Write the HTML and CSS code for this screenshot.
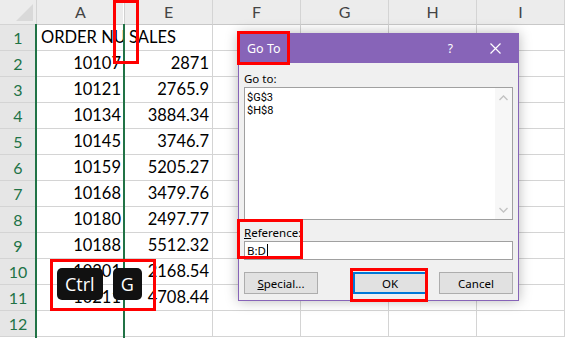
FILE: index.html
```html
<!DOCTYPE html>
<html lang="en">

<head>
    <meta charset="UTF-8">
    <meta name="viewport" content="width=device-width, initial-scale=1.0">
    <title>Go To</title>
    <link rel="stylesheet" href="styles.css">
</head>

<body>
    <div class="sheet">
        <div class="grid">
            <div class="corner">
                <svg width="17" height="17" viewBox="0 0 17 17"><polygon points="17,0 17,17 0,17" fill="#d9d9d9"/></svg>
            </div>
            <div class="col-head">A<span class="hidden-mark"></span></div>
            <div class="col-head">E</div>
            <div class="col-head">F</div>
            <div class="col-head">G</div>
            <div class="col-head">H</div>
            <div class="col-head">I</div>

            <div class="row-head">1</div><div class="cell">ORDER NU</div><div class="cell">SALES</div><div class="cell"></div><div class="cell"></div><div class="cell"></div><div class="cell"></div>
            <div class="row-head">2</div><div class="cell num">10107</div><div class="cell num">2871</div><div class="cell"></div><div class="cell"></div><div class="cell"></div><div class="cell"></div>
            <div class="row-head">3</div><div class="cell num">10121</div><div class="cell num">2765.9</div><div class="cell"></div><div class="cell"></div><div class="cell"></div><div class="cell"></div>
            <div class="row-head">4</div><div class="cell num">10134</div><div class="cell num">3884.34</div><div class="cell"></div><div class="cell"></div><div class="cell"></div><div class="cell"></div>
            <div class="row-head">5</div><div class="cell num">10145</div><div class="cell num">3746.7</div><div class="cell"></div><div class="cell"></div><div class="cell"></div><div class="cell"></div>
            <div class="row-head">6</div><div class="cell num">10159</div><div class="cell num">5205.27</div><div class="cell"></div><div class="cell"></div><div class="cell"></div><div class="cell"></div>
            <div class="row-head">7</div><div class="cell num">10168</div><div class="cell num">3479.76</div><div class="cell"></div><div class="cell"></div><div class="cell"></div><div class="cell"></div>
            <div class="row-head">8</div><div class="cell num">10180</div><div class="cell num">2497.77</div><div class="cell"></div><div class="cell"></div><div class="cell"></div><div class="cell"></div>
            <div class="row-head">9</div><div class="cell num">10188</div><div class="cell num">5512.32</div><div class="cell"></div><div class="cell"></div><div class="cell"></div><div class="cell"></div>
            <div class="row-head">10</div><div class="cell num">10201</div><div class="cell num">2168.54</div><div class="cell"></div><div class="cell"></div><div class="cell"></div><div class="cell"></div>
            <div class="row-head">11</div><div class="cell num">10211</div><div class="cell num">4708.44</div><div class="cell"></div><div class="cell"></div><div class="cell"></div><div class="cell"></div>
            <div class="row-head">12</div><div class="cell"></div><div class="cell"></div><div class="cell"></div><div class="cell"></div><div class="cell"></div><div class="cell"></div>
        </div>

        <!-- selection edges -->
        <div class="sel-line sel-left"></div>
        <div class="sel-line sel-mid"></div>

        <div class="keys">
            <span class="key">Ctrl</span>
            <span class="key">G</span>
        </div>

        <div class="dialog">
            <div class="titlebar">
                <span class="title">Go To</span>
                <span class="help">?</span>
                <svg class="close" width="11" height="11" viewBox="0 0 11 11"><path d="M0.5 0.5 L10.5 10.5 M10.5 0.5 L0.5 10.5" stroke="#fff" stroke-width="1.2"/></svg>
            </div>
            <div class="dialog-body">
                <div class="label">Go to:</div>
                <div class="listbox">
                    <div class="items">
                        <div>$G$3</div>
                        <div>$H$8</div>
                    </div>
                    <div class="scrollbar">
                        <svg width="9" height="6" viewBox="0 0 9 6"><path d="M0.5 5 L4.5 1 L8.5 5" fill="none" stroke="#c2c2c2" stroke-width="1.3"/></svg>
                        <svg width="9" height="6" viewBox="0 0 9 6"><path d="M0.5 1 L4.5 5 L8.5 1" fill="none" stroke="#c2c2c2" stroke-width="1.3"/></svg>
                    </div>
                </div>
                <div class="label ref-label"><u>R</u>eference:</div>
                <div class="textbox">B:D<span class="caret"></span></div>
                <div class="buttons">
                    <button class="btn"><u>S</u>pecial...</button>
                    <button class="btn btn-default">OK</button>
                    <button class="btn">Cancel</button>
                </div>
            </div>
        </div>

        <!-- callout boxes -->
        <div class="mark mark-col"></div>
        <div class="mark mark-title"></div>
        <div class="mark mark-ref"></div>
        <div class="mark mark-ok"></div>
        <div class="mark mark-keys"></div>
    </div>
</body>
</html>
```

FILE: styles.css
```css
body {
    margin: 0;
    background: #fff;
    overflow: hidden;
}

.sheet {
    position: relative;
    width: 566px;
    height: 338px;
    overflow: hidden;
    font-family: Lato, "Liberation Sans", sans-serif;
}

.grid {
    display: grid;
    grid-template-columns: 37px repeat(6, 88px);
    grid-template-rows: 25px repeat(12, 26px);
}

.grid > div {
    box-sizing: border-box;
    border-right: 1px solid #d4d4d4;
    border-bottom: 1px solid #d4d4d4;
}

.corner {
    background: #ececec;
    display: flex;
    align-items: flex-end;
    justify-content: flex-end;
    padding: 0 3px 3px 0;
}

.corner svg {
    display: block;
}

.col-head {
    position: relative;
    background: #ececec;
    color: #444;
    font-size: 16px;
    text-align: center;
    line-height: 24px;
    border-bottom-color: #c8c8c8 !important;
}

.hidden-mark {
    position: absolute;
    right: -3px;
    top: 0;
    width: 2px;
    height: 24px;
    border-left: 1px solid #fff;
    border-right: 1px solid #fff;
    background: #d0d0d0;
}

.row-head {
    background: #e6e6e6;
    color: #217346;
    font-size: 16px;
    text-align: center;
    line-height: 25px;
}

.cell {
    font-size: 16.5px;
    line-height: 25px;
    padding: 0 3px 0 4px;
    white-space: nowrap;
    overflow: hidden;
    color: #000;
}

.num {
    text-align: right;
}

.sel-line {
    position: absolute;
    top: 24px;
    bottom: 0;
    width: 2px;
    background: #217346;
}

.sel-left {
    left: 35px;
}

.sel-mid {
    left: 123px;
}

/* shortcut keys */
.keys {
    position: absolute;
    left: 57px;
    top: 268px;
    display: flex;
    gap: 10px;
}

.key {
    height: 32px;
    padding: 0 8px;
    background: #111;
    color: #fff;
    border-radius: 5px;
    font-family: "Open Sans", sans-serif;
    font-size: 18px;
    line-height: 32px;
}

/* dialog */
.dialog {
    position: absolute;
    left: 238px;
    top: 33px;
    width: 281px;
    height: 268px;
    box-sizing: border-box;
    border: 1px solid #8764b8;
    background: #f0f0f0;
    box-shadow: 0 0 12px rgba(0, 0, 0, 0.28);
    font-family: "Noto Sans", sans-serif;
    font-size: 11.5px;
    color: #000;
}

.titlebar {
    height: 29px;
    background: #8764b8;
    color: #fff;
    display: flex;
    align-items: center;
    padding: 0 17px 0 8px;
}

.title {
    font-size: 12.5px;
    flex: 1;
}

.help {
    font-size: 12px;
    margin-right: 37px;
}

.close {
    display: block;
}

.dialog-body {
    padding: 8px 5px 0 5px;
}

.label {
    height: 16px;
    line-height: 16px;
}

.listbox {
    height: 133px;
    box-sizing: border-box;
    border: 1px solid #a0a0a0;
    background: #fff;
    display: flex;
}

.items {
    flex: 1;
    padding: 3px 0 0 2px;
    font-family: Roboto, sans-serif;
    font-size: 11px;
    line-height: 13px;
}

.scrollbar {
    width: 17px;
    background: #f7f7f7;
    display: flex;
    flex-direction: column;
    justify-content: space-between;
    align-items: center;
    padding: 7px 0 6px;
}

.scrollbar svg {
    display: block;
}

.ref-label {
    margin-top: 5px;
}

.textbox {
    height: 19px;
    box-sizing: border-box;
    border: 1px solid #a0a0a0;
    background: #fff;
    padding-left: 2px;
    font-size: 11.5px;
    line-height: 17px;
    display: flex;
    align-items: center;
}

.caret {
    display: inline-block;
    width: 1px;
    height: 13px;
    background: #000;
    margin-left: 1px;
}

.buttons {
    display: flex;
    gap: 12px;
    margin-top: 12px;
}

.btn {
    width: 74px;
    height: 22px;
    box-sizing: border-box;
    background: #e1e1e1;
    border: 1px solid #adadad;
    font-family: "Noto Sans", sans-serif;
    font-size: 11.5px;
    color: #000;
    padding: 0;
}

.btn-default {
    margin-left: auto;
    border: 2px solid #0078d7;
}

/* red callouts */
.mark {
    position: absolute;
    border: 3px solid #f00;
    box-sizing: border-box;
}

.mark-col {
    left: 113px;
    top: 0;
    width: 26px;
    height: 64px;
}

.mark-title {
    left: 237px;
    top: 31px;
    width: 53px;
    height: 34px;
}

.mark-ref {
    left: 237px;
    top: 219px;
    width: 66px;
    height: 40px;
}

.mark-ok {
    left: 350px;
    top: 268px;
    width: 78px;
    height: 34px;
}

.mark-keys {
    left: 50px;
    top: 259px;
    width: 106px;
    height: 52px;
}
```
